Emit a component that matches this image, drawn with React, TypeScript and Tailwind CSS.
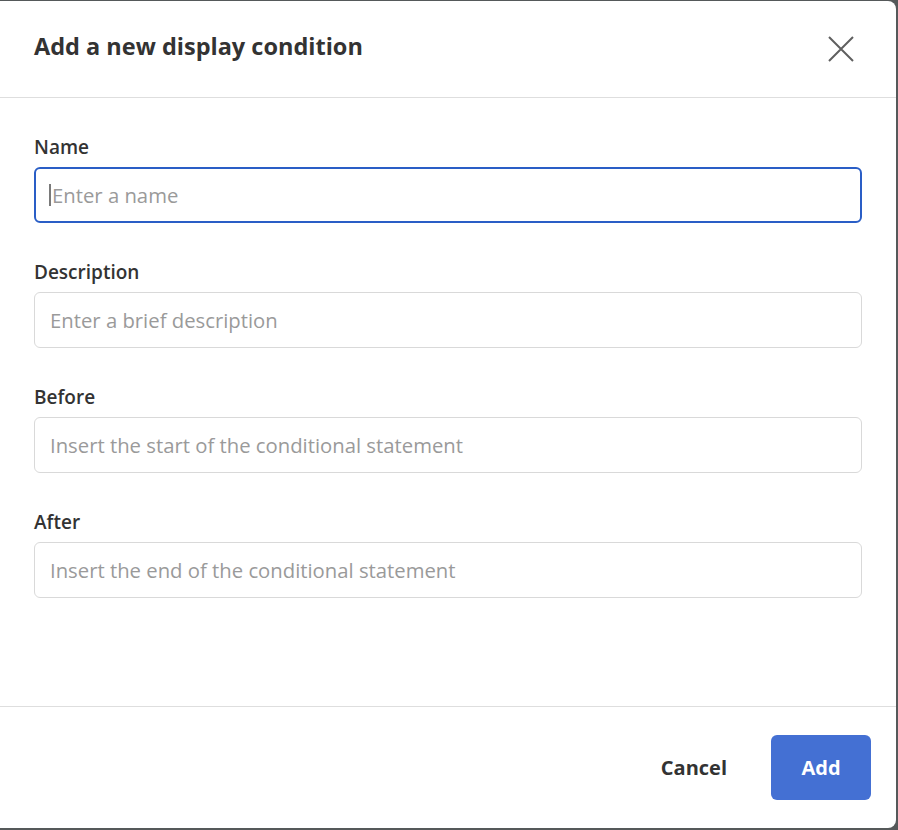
const fields = [
  { label: "Name", placeholder: "Enter a name", focused: true },
  { label: "Description", placeholder: "Enter a brief description" },
  { label: "Before", placeholder: "Insert the start of the conditional statement" },
  { label: "After", placeholder: "Insert the end of the conditional statement" },
];

export default function App() {
  return (
    <div className="w-[898px] h-[830px] bg-[#55595a] pt-px overflow-hidden font-['Open_Sans',sans-serif]">
      <div className="w-[896px] h-[827px] bg-white rounded-r-lg flex flex-col">
        {/* Header */}
        <div className="h-[97px] shrink-0 flex items-center justify-between pl-[34px] pr-[42px] border-b border-[#dedede]">
          <h1 className="text-[23.5px] font-bold text-[#333333] -mt-[4px]">Add a new display condition</h1>
          <svg width="26" height="26" viewBox="0 0 26 26" className="text-[#5f5f5f]">
            <path d="M1 1L25 25M25 1L1 25" stroke="currentColor" strokeWidth="2" fill="none" />
          </svg>
        </div>

        {/* Body */}
        <div className="flex-1 px-[34px] pt-[37px] flex flex-col gap-[37px]">
          {fields.map((f) => (
            <div key={f.label} className="flex flex-col gap-[7px]">
              <label className="text-[19px] leading-[25px] font-semibold text-[#333333]">{f.label}</label>
              <div className="relative">
                <input
                  placeholder={f.placeholder}
                  className={
                    f.focused
                      ? "w-full h-[56px] rounded-md border-2 border-[#2a5ec6] pl-[16px] text-[20.3px] text-[#333] placeholder:text-[#9a9a9a] outline-none"
                      : "w-full h-[56px] rounded-md border border-[#d9d9d9] pl-[15px] text-[20.3px] text-[#333] placeholder:text-[#9a9a9a] outline-none"
                  }
                />
                {f.focused && (
                  <span className="absolute left-[15px] top-[17px] w-[2px] h-[22px] bg-[#7a7a7a]" />
                )}
              </div>
            </div>
          ))}
        </div>

        {/* Footer */}
        <div className="h-[122px] shrink-0 border-t border-[#dedede] flex items-center justify-end gap-[44px] pr-[25px]">
          <button className="text-[20px] font-bold text-[#333333]">Cancel</button>
          <button className="w-[100px] h-[65px] rounded-md bg-[#4470d3] text-white text-[20px] font-bold">
            Add
          </button>
        </div>
      </div>
    </div>
  );
}
